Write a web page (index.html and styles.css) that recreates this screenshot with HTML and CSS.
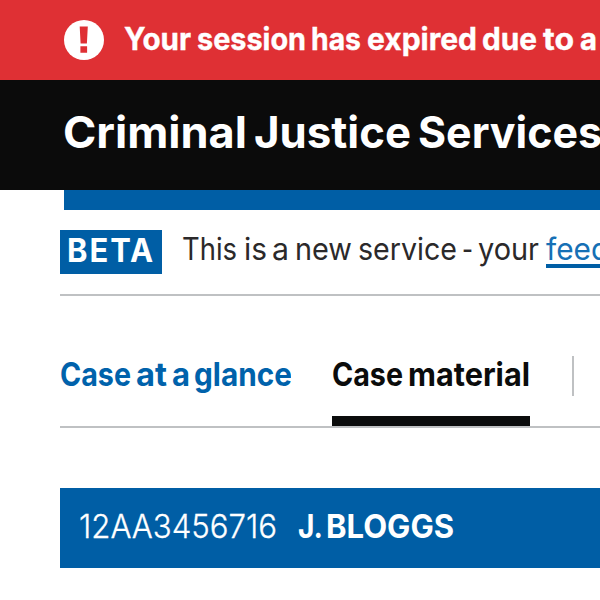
FILE: index.html
```
<!DOCTYPE html>
<html lang="en">
<head>
<meta charset="utf-8">
<title>Criminal Justice Services</title>
<link rel="stylesheet" href="styles.css">
</head>
<body>
<div class="alert">
<svg class="alert-icon" viewBox="0 0 40 40" aria-hidden="true"><circle cx="20" cy="20" r="20" fill="#fff"/><path d="M15.7 6.5h8.1l-.9 17h-6.3zM16.4 26.3h6.7v6.4h-6.7z" fill="#df3034"/></svg>
<svg class="line alert-text" width="530" height="60"><text y="40"><tspan x="0" textLength="67" lengthAdjust="spacingAndGlyphs">Your</tspan> <tspan x="73" textLength="109" lengthAdjust="spacingAndGlyphs">session</tspan> <tspan x="187" textLength="50" lengthAdjust="spacingAndGlyphs">has</tspan> <tspan x="243" textLength="110" lengthAdjust="spacingAndGlyphs">expired</tspan> <tspan x="358" textLength="55" lengthAdjust="spacingAndGlyphs">due</tspan> <tspan x="419" textLength="31" lengthAdjust="spacingAndGlyphs">to</tspan> <tspan x="456" textLength="17" lengthAdjust="spacingAndGlyphs">a</tspan></text></svg>
</div>
<header class="header">
<svg class="line header-text" width="540" height="70"><text y="52"><tspan x="-1" textLength="184" lengthAdjust="spacingAndGlyphs">Criminal</tspan> <tspan x="190" textLength="157" lengthAdjust="spacingAndGlyphs">Justice</tspan> <tspan x="354" textLength="184" lengthAdjust="spacingAndGlyphs">Services</tspan></text></svg>
</header>
<div class="accent"></div>
<section class="phase">
<strong class="tag"><svg class="line tag-text" width="102" height="44"><text x="7" y="32" textLength="88" lengthAdjust="spacingAndGlyphs">BETA</text></svg></strong>
<svg class="line phase-text" width="420" height="44"><text y="30"><tspan x="0" textLength="55" lengthAdjust="spacingAndGlyphs">This</tspan> <tspan x="62" textLength="23" lengthAdjust="spacingAndGlyphs">is</tspan> <tspan x="90" textLength="17" lengthAdjust="spacingAndGlyphs">a</tspan> <tspan x="113" textLength="57" lengthAdjust="spacingAndGlyphs">new</tspan> <tspan x="176" textLength="99" lengthAdjust="spacingAndGlyphs">service</tspan> <tspan x="280" textLength="11" lengthAdjust="spacingAndGlyphs">-</tspan> <tspan x="296" textLength="61" lengthAdjust="spacingAndGlyphs">your</tspan></text><text class="link" x="364" y="30" textLength="132" lengthAdjust="spacingAndGlyphs">feedback</text><path d="M364 36h60" stroke="#005ea5" stroke-width="4"/></svg>
</section>
<nav class="tabs">
<a class="tab"><svg class="line" width="231" height="60"><text y="40"><tspan x="0" textLength="71" lengthAdjust="spacingAndGlyphs">Case</tspan> <tspan x="76" textLength="31" lengthAdjust="spacingAndGlyphs">at</tspan> <tspan x="112" textLength="18" lengthAdjust="spacingAndGlyphs">a</tspan> <tspan x="134" textLength="98" lengthAdjust="spacingAndGlyphs">glance</tspan></text></svg></a>
<a class="tab current"><svg class="line" width="198" height="60"><text y="40"><tspan x="0" textLength="71" lengthAdjust="spacingAndGlyphs">Case</tspan> <tspan x="76" textLength="122" lengthAdjust="spacingAndGlyphs">material</tspan></text></svg></a>
<span class="divider"></span>
</nav>
<section class="case">
<svg class="line case-text" width="520" height="80"><text class="number" x="19" y="50" textLength="198" lengthAdjust="spacingAndGlyphs">12AA3456716</text><text class="name" y="50"><tspan x="238" textLength="24" lengthAdjust="spacingAndGlyphs">J.</tspan> <tspan x="266" textLength="128" lengthAdjust="spacingAndGlyphs">BLOGGS</tspan></text></svg>
</section>
</body>
</html>
```
FILE: styles.css
```
* { box-sizing: border-box; }
body { margin: 0; width: 600px; height: 600px; overflow: hidden; background: #fff; color: #0b0c0c; font-family: Inter, "Liberation Sans", sans-serif; }
.line { display: block; flex: none; fill: currentColor; overflow: hidden; }
.alert { height: 80px; padding-left: 64px; display: flex; align-items: center; gap: 20px; background: #df3034; color: #fff; overflow: hidden; }
.alert-icon { width: 40px; height: 40px; flex: none; }
.alert-text { font-size: 31px; font-weight: 700; stroke: #fff; stroke-width: .4px; }
.header { height: 110px; padding: 16px 0 0 64px; background: #0b0b0b; color: #fff; overflow: hidden; }
.header-text { font-size: 44px; font-weight: 700; }
.accent { height: 20px; margin-left: 64px; background: #005ea5; }
.phase { height: 86px; margin-left: 60px; padding-top: 20px; display: flex; gap: 20px; border-bottom: 2px solid #bfc1c3; overflow: hidden; }
.tag { width: 102px; height: 44px; flex: none; background: #005ea5; color: #fff; }
.tag-text { font-size: 32px; font-weight: 700; letter-spacing: 2px; }
.phase-text { font-size: 30.5px; fill: #2b292a; }
.link { fill: #1670b5; }
.tabs { height: 132px; margin-left: 60px; padding-top: 50px; display: flex; gap: 41px; border-bottom: 2px solid #bfc1c3; }
.tab { height: 80px; color: #0062ab; font-size: 32.5px; font-weight: 700; }
.current { color: #0b0c0c; border-bottom: 10px solid #0b0c0c; }
.divider { width: 2px; height: 40px; margin: 10px 0 0 1px; background: #bfc1c3; }
.case { height: 80px; margin: 60px 0 0 60px; background: #005ea5; color: #fff; }
.case-text { font-size: 32px; }
.number { font-weight: 300; stroke: #fff; stroke-width: .3px; }
.name { font-weight: 700; }
```
